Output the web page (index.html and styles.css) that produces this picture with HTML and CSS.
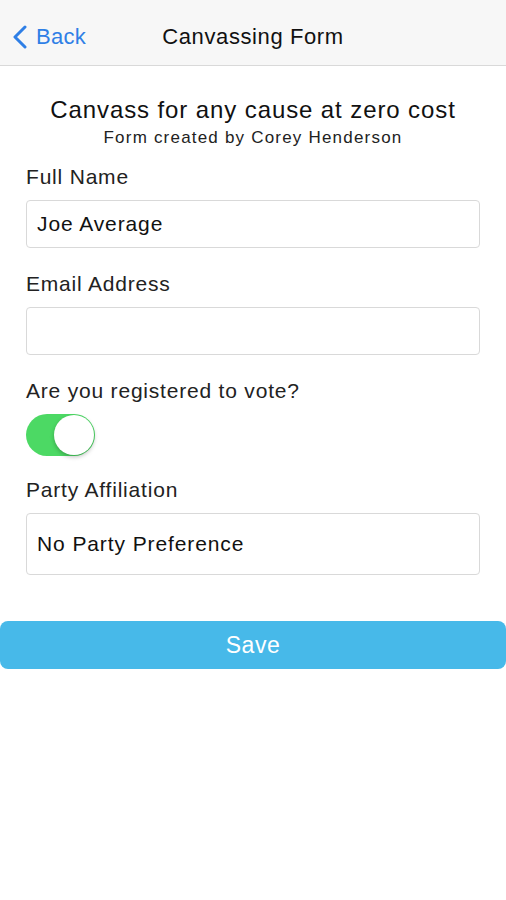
FILE: index.html
```html
<!DOCTYPE html>
<html>
  <head>
    <meta charset="utf-8">
    <title>Canvassing Form</title>
    <link rel="stylesheet" href="styles.css">
  </head>
  <body>
    <div class="status-tab"></div>
    <div class="navbar">
      <a class="back" href="#">
        <svg class="chevron" width="20" height="24" viewBox="0 0 20 24">
          <path d="M15 2 L5 12 L15 22" fill="none" stroke="#2f7fe6" stroke-width="3" stroke-linecap="round" stroke-linejoin="round"/>
        </svg>
        <span>Back</span>
      </a>
      <div class="nav-title">Canvassing Form</div>
    </div>

    <div id="form">
      <div class="intro">
        <h1>Canvass for any cause at zero cost</h1>
        <p>Form created by Corey Henderson</p>
      </div>

      <label class="lbl first">Full Name</label>
      <div class="field">Joe Average</div>

      <label class="lbl">Email Address</label>
      <div class="field"></div>

      <label class="lbl">Are you registered to vote?</label>
      <div class="toggle"><div class="knob"></div></div>

      <label class="lbl after-toggle">Party Affiliation</label>
      <div class="field select">No Party Preference</div>
    </div>

    <button class="save">Save</button>
  </body>
</html>
```

FILE: styles.css
```css
body {
  margin: 0;
  font-family: "Liberation Sans", Arial, sans-serif;
  color: #222;
  background: #fff;
  width: 506px;
  height: 900px;
  position: relative;
}
.status-tab {
  position: absolute;
  top: 0;
  right: 11px;
  width: 30px;
  height: 2px;
  background: #d4d4d4;
}
.navbar {
  height: 65px;
  background: #f7f7f7;
  border-bottom: 1px solid #d9d9d9;
  display: flex;
  align-items: center;
  justify-content: center;
  position: relative;
}
.back {
  position: absolute;
  left: 10px;
  top: 0;
  height: 65px;
  display: flex;
  align-items: center;
  gap: 6px;
  color: #2f7fe6;
  text-decoration: none;
  font-size: 22px;
  letter-spacing: 0.3px;
  padding-top: 8px;
  box-sizing: border-box;
}
.nav-title {
  font-size: 22px;
  letter-spacing: 0.6px;
  color: #111;
  padding-top: 8px;
}
#form {
  padding: 0 26px;
}
.intro {
  text-align: center;
  padding-top: 30px;
}
.intro h1 {
  margin: 0;
  font-weight: normal;
  font-size: 24px;
  letter-spacing: 0.9px;
  line-height: 28px;
  color: #111;
}
.intro p {
  margin: 4px 0 0;
  font-size: 17px;
  letter-spacing: 1.2px;
  line-height: 20px;
  color: #222;
}
.lbl {
  display: block;
  font-size: 21px;
  letter-spacing: 0.8px;
  line-height: 24px;
  color: #222;
  margin-top: 24px;
}
.lbl.first {
  margin-top: 17px;
}
.lbl.after-toggle {
  margin-top: 22px;
}
.field {
  height: 48px;
  margin-top: 11px;
  border: 1px solid #d9d9d9;
  border-radius: 4px;
  box-sizing: border-box;
  padding: 0 10px;
  display: flex;
  align-items: center;
  font-size: 21px;
  letter-spacing: 0.9px;
  color: #111;
}
.field.select {
  height: 62px;
}
.toggle {
  margin-top: 11px;
  width: 69px;
  height: 42px;
  border-radius: 21px;
  background: #4cd964;
  position: relative;
}
.knob {
  position: absolute;
  right: 1px;
  top: 1px;
  width: 40px;
  height: 40px;
  border-radius: 50%;
  background: #fff;
  box-shadow: 0 2px 4px rgba(0, 0, 0, 0.25);
}
.save {
  display: block;
  margin-top: 46px;
  width: 506px;
  height: 48px;
  border: none;
  border-radius: 8px;
  background: #47b9e9;
  color: #fff;
  font-family: "Liberation Sans", Arial, sans-serif;
  font-size: 23px;
  letter-spacing: 0.5px;
}
```
